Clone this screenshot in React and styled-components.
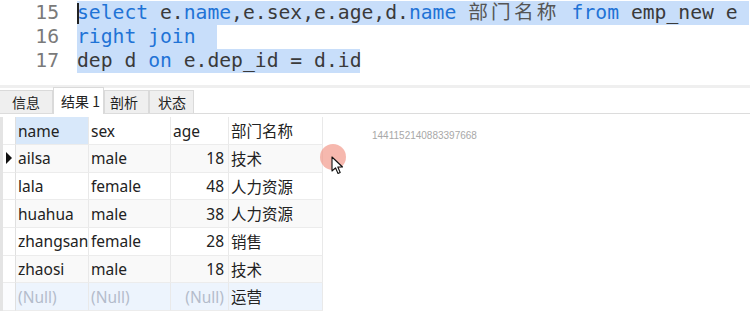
import React from "react";
import styled, { createGlobalStyle } from "styled-components";

const Global = createGlobalStyle`
  html, body { margin: 0; padding: 0; background: #fff; }
  body { width: 750px; height: 317px; overflow: hidden; }
`;

const Page = styled.div`
  width: 750px;
  height: 317px;
  position: relative;
  overflow: hidden;
  background: #fff;
`;

const Editor = styled.div`
  height: 85px;
  padding-top: 1px;
  box-sizing: border-box;
  font-family: "DejaVu Sans Mono", "Liberation Mono", "Noto Sans CJK SC", monospace;
  font-size: 19.7px;
  color: #3a3a3a;
`;

const Line = styled.div`
  display: flex;
  height: 24px;
  line-height: 24px;
`;

const LineNo = styled.div`
  width: 59px;
  text-align: right;
  color: #7a7a7a;
  flex: none;
`;

const Code = styled.div`
  margin-left: 18px;
  position: relative;
  background: #c8defa;
  white-space: pre;
  width: ${(p) => p.$w};
`;

const Caret = styled.span`
  position: absolute;
  left: 0;
  top: 2px;
  width: 1.5px;
  height: 21px;
  background: #222;
`;

const Kw = styled.span`
  color: #1f73d6;
`;

const Cjk = styled.span`
  letter-spacing: 3.2px;
  color: #555;
`;

const Strip = styled.div`
  height: 3px;
  background: #efefef;
`;

const TabBar = styled.div`
  display: flex;
  align-items: flex-end;
  height: 25px;
  border-bottom: 1px solid #dcdcdc;
  font-family: "Noto Sans CJK SC", sans-serif;
  font-size: 14px;
  color: #222;
`;

const Tab = styled.div`
  box-sizing: border-box;
  width: ${(p) => p.$w}px;
  height: ${(p) => (p.$active ? 27 : 23)}px;
  margin-bottom: ${(p) => (p.$active ? -1 : 0)}px;
  background: ${(p) => (p.$active ? "#fff" : "#efefef")};
  border: 1px solid #dadada;
  border-bottom: none;
  border-left: ${(p) => (p.$first ? "none" : "1px solid #dadada")};
  display: flex;
  align-items: center;
  padding-left: ${(p) => p.$pl}px;
  position: relative;
  z-index: ${(p) => (p.$active ? 1 : 0)};
`;

const GridArea = styled.div`
  display: flex;
  padding-top: 3px;
`;

const Grid = styled.div`
  display: grid;
  grid-template-columns: 13px 73px 82px 58px 94px;
  grid-template-rows: 28px repeat(6, 27.7px);
  font-family: "Noto Sans", "Noto Sans CJK SC", sans-serif;
  font-size: 15.5px;
  color: #222;
  border-left: 3px solid #e4e4e4;
  box-sizing: border-box;
`;

const Cell = styled.div`
  box-sizing: border-box;
  border-right: 1px solid #e9e9e9;
  border-bottom: 1px solid #ececec;
  background: ${(p) => p.$bg || "transparent"};
  color: ${(p) => p.$color || "inherit"};
  display: flex;
  align-items: center;
  justify-content: ${(p) => (p.$right ? "flex-end" : "flex-start")};
  padding: 0 ${(p) => (p.$right ? 4 : 0)}px 0 ${(p) => (p.$right ? 0 : 2)}px;
  white-space: nowrap;
  overflow: hidden;
`;

const Indicator = styled.div`
  box-sizing: border-box;
  border-right: 1px solid #e0e0e0;
  border-bottom: 1px solid #ececec;
  background: ${(p) => p.$bg || "#fff"};
  display: flex;
  align-items: center;
  padding-left: 3px;
`;

const Arrow = styled.span`
  width: 0;
  height: 0;
  border-top: 6px solid transparent;
  border-bottom: 6px solid transparent;
  border-left: 6px solid #111;
`;

const IdText = styled.div`
  font-family: "Liberation Sans", sans-serif;
  font-size: 10px;
  color: #a8a8a8;
  margin-left: 49px;
  margin-top: 13px;
`;

const Pointer = styled.div`
  position: absolute;
  left: 320px;
  top: 144px;
  width: 26px;
  height: 26px;
  border-radius: 50%;
  background: rgba(240, 140, 125, 0.62);
`;

const CursorSvg = styled.svg`
  position: absolute;
  left: 331px;
  top: 156px;
`;

const rows = [
  ["ailsa", "male", "18", "技术"],
  ["lala", "female", "48", "人力资源"],
  ["huahua", "male", "38", "人力资源"],
  ["zhangsan", "female", "28", "销售"],
  ["zhaosi", "male", "18", "技术"],
];

export default function App() {
  return (
    <Page>
      <Global />
      <Editor>
        <Line>
          <LineNo>15</LineNo>
          <Code $w="672px">
            <Caret />
            <Kw>select</Kw> e.<Kw>name</Kw>,e.sex,e.age,d.<Kw>name</Kw> <Cjk>部门名称</Cjk> <Kw>from</Kw> emp_new e
          </Code>
        </Line>
        <Line>
          <LineNo>16</LineNo>
          <Code $w="140px">
            <Kw>right join</Kw>
          </Code>
        </Line>
        <Line>
          <LineNo>17</LineNo>
          <Code $w="283px">
            dep d <Kw>on</Kw> e.dep_id = d.id
          </Code>
        </Line>
      </Editor>
      <Strip />
      <TabBar>
        <Tab $w={53} $pl={12} $first>信息</Tab>
        <Tab $w={51} $pl={7} $active>结果 1</Tab>
        <Tab $w={45} $pl={5}>剖析</Tab>
        <Tab $w={45} $pl={8}>状态</Tab>
      </TabBar>
      <GridArea>
        <Grid>
          <Indicator />
          <Cell $bg="#d8e8fa">name</Cell>
          <Cell>sex</Cell>
          <Cell>age</Cell>
          <Cell>部门名称</Cell>
          {rows.map((r, i) => {
            const bg = i % 2 === 0 ? "#f9f9f9" : "#fff";
            return (
              <React.Fragment key={i}>
                <Indicator $bg="#fff">{i === 0 && <Arrow />}</Indicator>
                <Cell $bg={bg}>{r[0]}</Cell>
                <Cell $bg={bg}>{r[1]}</Cell>
                <Cell $bg={bg} $right>{r[2]}</Cell>
                <Cell $bg={bg}>{r[3]}</Cell>
              </React.Fragment>
            );
          })}
          <Indicator $bg="#fbfcfe" />
          <Cell $bg="#edf4fd" $color="#b4bccb">(Null)</Cell>
          <Cell $bg="#edf4fd" $color="#b4bccb">(Null)</Cell>
          <Cell $bg="#edf4fd" $color="#b4bccb" $right>(Null)</Cell>
          <Cell $bg="#edf4fd">运营</Cell>
        </Grid>
        <IdText>1441152140883397668</IdText>
      </GridArea>
      <Pointer />
      <CursorSvg width="14" height="20" viewBox="0 0 14 20">
        <path d="M1 1 L1 15 L4.5 11.8 L7 17.5 L9.2 16.5 L6.8 11 L11.5 11 Z" fill="#fff" stroke="#111" strokeWidth="1.1" strokeLinejoin="round" />
      </CursorSvg>
    </Page>
  );
}
